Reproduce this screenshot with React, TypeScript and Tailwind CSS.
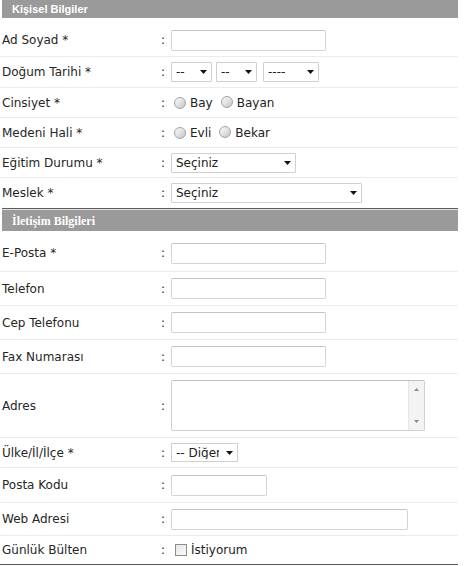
import React from "react";

const Radio = () => (
  <span className="inline-block w-[12px] h-[12px] rounded-full border border-[#a3a3a3] bg-gradient-to-br from-[#fafafa] via-[#e2e2e2] to-[#c4c4c4] shrink-0" />
);

const Arrow = () => (
  <svg width="7" height="4" viewBox="0 0 7 4" className="shrink-0">
    <path d="M0 0h7L3.5 4z" fill="#141414" />
  </svg>
);

const Select = ({ w, h = "h-[20px]", text }: { w: string; h?: string; text: React.ReactNode }) => (
  <div className={`${w} ${h} flex items-center justify-between border border-[#d0d0d0] bg-white pl-[4px] pr-[4px] rounded-[1px]`}>
    <span className="text-[12px] leading-none text-[#222]">{text}</span>
    <Arrow />
  </div>
);

const Input = ({ w }: { w: string }) => (
  <input
    type="text"
    className={`${w} h-[21px] border border-[#d4d4d4] border-t-[#c4c4c4] rounded-[2px] bg-white outline-none`}
  />
);

const Row = ({
  label,
  cls,
  children,
}: {
  label: string;
  cls: string;
  children: React.ReactNode;
}) => (
  <div className={`flex items-center ${cls}`}>
    <div className="w-[161px] pl-[2px] shrink-0 text-[12px] text-[#262626] leading-none">{label}</div>
    <div className="w-[10px] shrink-0 text-[12px] text-[#262626] leading-none">:</div>
    <div className="flex items-center">{children}</div>
  </div>
);

export default function App() {
  return (
    <div className="w-[458px] bg-white font-['DejaVu_Sans',Verdana,sans-serif]">
      <div className="ml-[2px] h-[18px] bg-[#9a9a9a] flex items-center pl-[10px]">
        <span className="font-['Liberation_Sans',Arial,sans-serif] font-bold text-[11px] text-white leading-none">
          Kişisel Bilgiler
        </span>
      </div>

      <Row label="Ad Soyad *" cls="h-[39px] pt-[6px] border-b border-[#ebebeb]">
        <Input w="w-[155px]" />
      </Row>
      <Row label="Doğum Tarihi *" cls="h-[31px] border-b border-[#ebebeb]">
        <div className="flex items-center">
          <Select w="w-[41px]" text="--" />
          <div className="ml-[4px]">
            <Select w="w-[41px]" text="--" />
          </div>
          <div className="ml-[6px]">
            <Select w="w-[56px]" text="----" />
          </div>
        </div>
      </Row>
      <Row label="Cinsiyet *" cls="h-[30px] border-b border-[#ebebeb]">
        <div className="flex items-center text-[12px] text-[#222] leading-none pl-[3px]">
          <Radio />
          <span className="ml-[4px]">Bay</span>
          <span className="ml-[8px]"><Radio /></span>
          <span className="ml-[4px]">Bayan</span>
        </div>
      </Row>
      <Row label="Medeni Hali *" cls="h-[30px] border-b border-[#ebebeb]">
        <div className="flex items-center text-[12px] text-[#222] leading-none pl-[3px]">
          <Radio />
          <span className="ml-[4px]">Evli</span>
          <span className="ml-[8px]"><Radio /></span>
          <span className="ml-[4px]">Bekar</span>
        </div>
      </Row>
      <Row label="Eğitim Durumu *" cls="h-[30px] border-b border-[#ebebeb]">
        <Select w="w-[125px]" text="Seçiniz" />
      </Row>
      <Row label="Meslek *" cls="h-[30px]">
        <Select w="w-[191px]" text="Seçiniz" />
      </Row>

      <div className="ml-[2px] border-t border-[#5c5c5c] pt-[1px] bg-[#e4e4e4]">
        <div className="h-[21px] bg-[#9a9a9a] flex items-center pl-[10px]">
          <span className="font-['Liberation_Serif',Georgia,serif] font-bold text-[12px] text-white leading-none">
            İletişim Bilgileri
          </span>
        </div>
      </div>

      <Row label="E-Posta *" cls="h-[41px] pt-[4px] border-b border-[#ebebeb]">
        <Input w="w-[155px]" />
      </Row>
      <Row label="Telefon" cls="h-[34px] border-b border-[#ebebeb]">
        <Input w="w-[155px]" />
      </Row>
      <Row label="Cep Telefonu" cls="h-[34px] border-b border-[#ebebeb]">
        <Input w="w-[155px]" />
      </Row>
      <Row label="Fax Numarası" cls="h-[34px] border-b border-[#ebebeb]">
        <Input w="w-[155px]" />
      </Row>
      <Row label="Adres" cls="h-[64px] border-b border-[#ebebeb]">
        <div className="w-[254px] h-[51px] border border-[#d0d0d0] border-t-[#c0c0c0] rounded-[2px] bg-white flex justify-end">
          <div className="w-[16px] h-full bg-[#f3f3f3] border-l border-[#e6e6e6] flex flex-col items-center justify-between py-[7px]">
            <svg width="5" height="3" viewBox="0 0 5 3">
              <path d="M0 3h5L2.5 0z" fill="#8a8a8a" />
            </svg>
            <svg width="5" height="3" viewBox="0 0 5 3">
              <path d="M0 0h5L2.5 3z" fill="#8a8a8a" />
            </svg>
          </div>
        </div>
      </Row>
      <Row label="Ülke/İl/İlçe *" cls="h-[30px] border-b border-[#ebebeb]">
        <div className="w-[67px] h-[19px] flex items-center border border-[#d0d0d0] bg-white pl-[4px] pr-[4px]">
          <span className="w-[45px] overflow-hidden whitespace-nowrap text-[12px] leading-none text-[#222]">
            -- Diğer
          </span>
          <span className="ml-[7px]"><Arrow /></span>
        </div>
      </Row>
      <Row label="Posta Kodu" cls="h-[35px] border-b border-[#ebebeb]">
        <Input w="w-[96px]" />
      </Row>
      <Row label="Web Adresi" cls="h-[33px] border-b border-[#ebebeb]">
        <Input w="w-[237px]" />
      </Row>
      <Row label="Günlük Bülten" cls="h-[29px] border-b border-[#555555]">
        <div className="flex items-center text-[12px] text-[#222] leading-none pl-[4px]">
          <span className="inline-block w-[12px] h-[12px] border border-[#8c8c8c] bg-gradient-to-br from-[#e6e6e6] to-[#fbfbfb]" />
          <span className="ml-[4px]">İstiyorum</span>
        </div>
      </Row>
    </div>
  );
}
